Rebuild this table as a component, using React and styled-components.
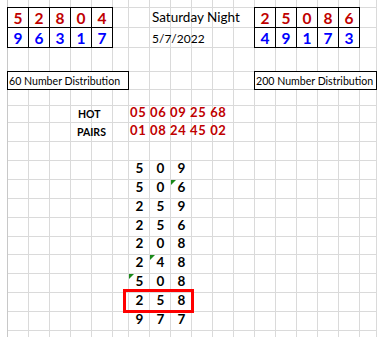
import React from "react";
import styled, { createGlobalStyle } from "styled-components";

const COLS = "21px 21px 21px 21px 21px 16px repeat(11, 21px) 17px";
const ROWS = "8px 20px 20px 24px 18px 16px 17px 19px 19px 19px 19px 19px 19px 18px 19px 19px 19px 19px 19px";
const COL_COUNT = 18;
const ROW_COUNT = 19;

const topPicks = [
  { col: 1, digits: ["5", "2", "8", "0", "4"] },
  { col: 13, digits: ["2", "5", "0", "8", "6"] },
];
const bottomPicks = [
  { col: 1, digits: ["9", "6", "3", "1", "7"] },
  { col: 13, digits: ["4", "9", "1", "7", "3"] },
];

// flag = index of the digit cell carrying Excel's green error marker
const combos = [
  { d: "509" },
  { d: "506", flag: 2 },
  { d: "259" },
  { d: "256" },
  { d: "208" },
  { d: "248", flag: 1 },
  { d: "508", flag: 0 },
  { d: "258" },
  { d: "977" },
];

const GlobalStyle = createGlobalStyle`
  html, body {
    margin: 0;
    padding: 0;
    background: #ffffff;
    overflow: hidden;
  }
  body {
    font-family: Lato, "Liberation Sans", sans-serif;
  }
`;

const Sheet = styled.div`
  display: grid;
  margin-left: 7px;
  width: 370px;
  border-left: 1px solid #c8c8c8;
`;

const Layer = styled.div`
  grid-area: 1 / 1;
  display: grid;
  grid-template-columns: ${COLS};
  grid-template-rows: ${ROWS};
`;

const GridCell = styled.div`
  box-sizing: border-box;
  border-right: 1px solid #dadada;
  border-bottom: 1px solid #dadada;
`;

const PickBox = styled.div`
  grid-row: ${(p) => p.$row};
  grid-column: ${(p) => p.$col};
  margin: -1px 0 0 -1px;
  border: 1px solid #000;
  display: flex;
  align-items: center;
  justify-content: center;
  font-weight: 700;
  font-size: 15.5px;
  color: ${(p) => p.$color};
  background: #fff;
`;

const Label = styled.div`
  grid-row: ${(p) => p.$row};
  grid-column: ${(p) => p.$col};
  display: flex;
  align-items: flex-end;
  padding: 0 0 ${(p) => p.$pb || 3}px ${(p) => p.$pl || 2}px;
  font-size: ${(p) => p.$size || 13}px;
  font-weight: ${(p) => (p.$bold ? 700 : 400)};
  letter-spacing: ${(p) => p.$track || 0}px;
  color: ${(p) => p.$color || "#000"};
  white-space: nowrap;
`;

const DistBox = styled.div`
  grid-row: 5;
  grid-column: ${(p) => p.$col};
  min-width: 0;
  margin: -1px 0 0 -1px;
  border: 1px solid #000;
  background: #fff;
  display: flex;
  align-items: center;
  padding-left: 1px;
  font-size: 10.6px;
  color: #000;
  white-space: nowrap;
`;

const Digit = styled.div`
  position: relative;
  grid-row: ${(p) => p.$row};
  grid-column: ${(p) => p.$col};
  display: flex;
  align-items: flex-end;
  justify-content: center;
  padding-bottom: 4px;
  font-size: 13.5px;
  font-weight: 700;
  color: #000;

  ${(p) =>
    p.$flag &&
    `&::before {
      content: "";
      position: absolute;
      left: 0;
      top: 0;
      border-top: 5px solid #1a8a1a;
      border-right: 5px solid transparent;
    }`}
`;

const Highlight = styled.div`
  grid-row: 17;
  grid-column: 7 / span 3;
  margin: -4px -2px -1px -6px;
  border: 3px solid #ff0000;
  z-index: 2;
`;

export default function App() {
  const cells = [];
  for (let i = 0; i < COL_COUNT * ROW_COUNT; i++) cells.push(<GridCell key={i} />);

  return (
    <>
      <GlobalStyle />
      <Sheet>
        <Layer>{cells}</Layer>
        <Layer>
          {topPicks.map((g) =>
            g.digits.map((d, i) => (
              <PickBox key={`t${g.col}${i}`} $row={2} $col={g.col + i} $color="#c00000">
                {d}
              </PickBox>
            ))
          )}
          {bottomPicks.map((g) =>
            g.digits.map((d, i) => (
              <PickBox key={`b${g.col}${i}`} $row={3} $col={g.col + i} $color="#0000ff">
                {d}
              </PickBox>
            ))
          )}

          <Label $row={2} $col="8 / span 5" $size={13.5} $pb={3}>
            Saturday Night
          </Label>
          <Label $row={3} $col="8 / span 3" $size={12} $pb={2}>
            5/7/2022
          </Label>

          <DistBox $col="1 / span 6">60 Number Distribution</DistBox>
          <DistBox $col="13 / span 6">200 Number Distribution</DistBox>

          <Label $row={7} $col="4 / span 3" $bold $size={10.5} $pl={7} $pb={3}>
            HOT
          </Label>
          <Label $row={8} $col="4 / span 3" $bold $size={10.5} $pl={6} $pb={4}>
            PAIRS
          </Label>
          <Label $row={7} $col="7 / span 6" $bold $size={13} $track={0.6} $color="#c00000" $pl={1} $pb={3}>
            05 06 09 25 68
          </Label>
          <Label $row={8} $col="7 / span 6" $bold $size={13} $track={0.6} $color="#c00000" $pl={1} $pb={4}>
            01 08 24 45 02
          </Label>

          {combos.map((c, r) =>
            c.d.split("").map((d, i) => (
              <Digit key={`${r}-${i}`} $row={10 + r} $col={7 + i} $flag={c.flag === i}>
                {d}
              </Digit>
            ))
          )}
          <Highlight />
        </Layer>
      </Sheet>
    </>
  );
}
